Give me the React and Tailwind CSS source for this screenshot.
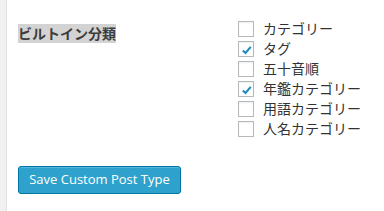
import React from "react";

const items = [
  { label: "カテゴリー", checked: false },
  { label: "タグ", checked: true },
  { label: "五十音順", checked: false },
  { label: "年鑑カテゴリー", checked: true },
  { label: "用語カテゴリー", checked: false },
  { label: "人名カテゴリー", checked: false },
];

function Box({ checked }) {
  return (
    <span className="relative flex h-[16px] w-[16px] shrink-0 items-center justify-center border border-[#b4b9be] bg-white shadow-[inset_0_1px_2px_rgba(0,0,0,0.07)]">
      {checked && (
        <svg viewBox="0 0 16 16" className="absolute left-[1px] top-[1px] h-[14px] w-[14px]">
          <path d="M3.2 8.6 L6.3 11.4 L12.3 4.4" fill="none" stroke="#1e8cbe" strokeWidth="2.4" strokeLinecap="butt" strokeLinejoin="miter" />
        </svg>
      )}
    </span>
  );
}

export default function App() {
  return (
    <div
      className="flex h-[211px] w-[384px] overflow-hidden bg-white text-[#333]"
      style={{ fontFamily: '"Open Sans", "Noto Sans CJK JP", sans-serif' }}
    >
      <div className="w-[7px] shrink-0 border-r border-[#e2e2e2] bg-[#f1f1f1]" />
      <div className="flex-1 pl-[11px] pt-[19px]">
        <div className="flex">
          <div className="w-[220px] shrink-0 pt-[5px]">
            <div className="h-[19px] w-fit bg-[#d3d3d3] text-[14px] font-bold leading-[19px] text-[#3c3c3c]">
              ビルトイン分類
            </div>
          </div>
          <div className="flex flex-col">
            {items.map((it) => (
              <div key={it.label} className="flex h-[20px] items-center gap-[9px]">
                <Box checked={it.checked} />
                <span className="text-[14px] leading-[20px] text-[#333]">{it.label}</span>
              </div>
            ))}
          </div>
        </div>
        <button className="mt-[27px] flex h-[28px] w-[163px] items-center justify-center rounded-[3px] border border-[#0074a2] bg-[#2ea2cc] text-[13px] text-white shadow-[inset_0_1px_0_rgba(120,200,230,0.5)]">
          Save Custom Post Type
        </button>
      </div>
    </div>
  );
}
